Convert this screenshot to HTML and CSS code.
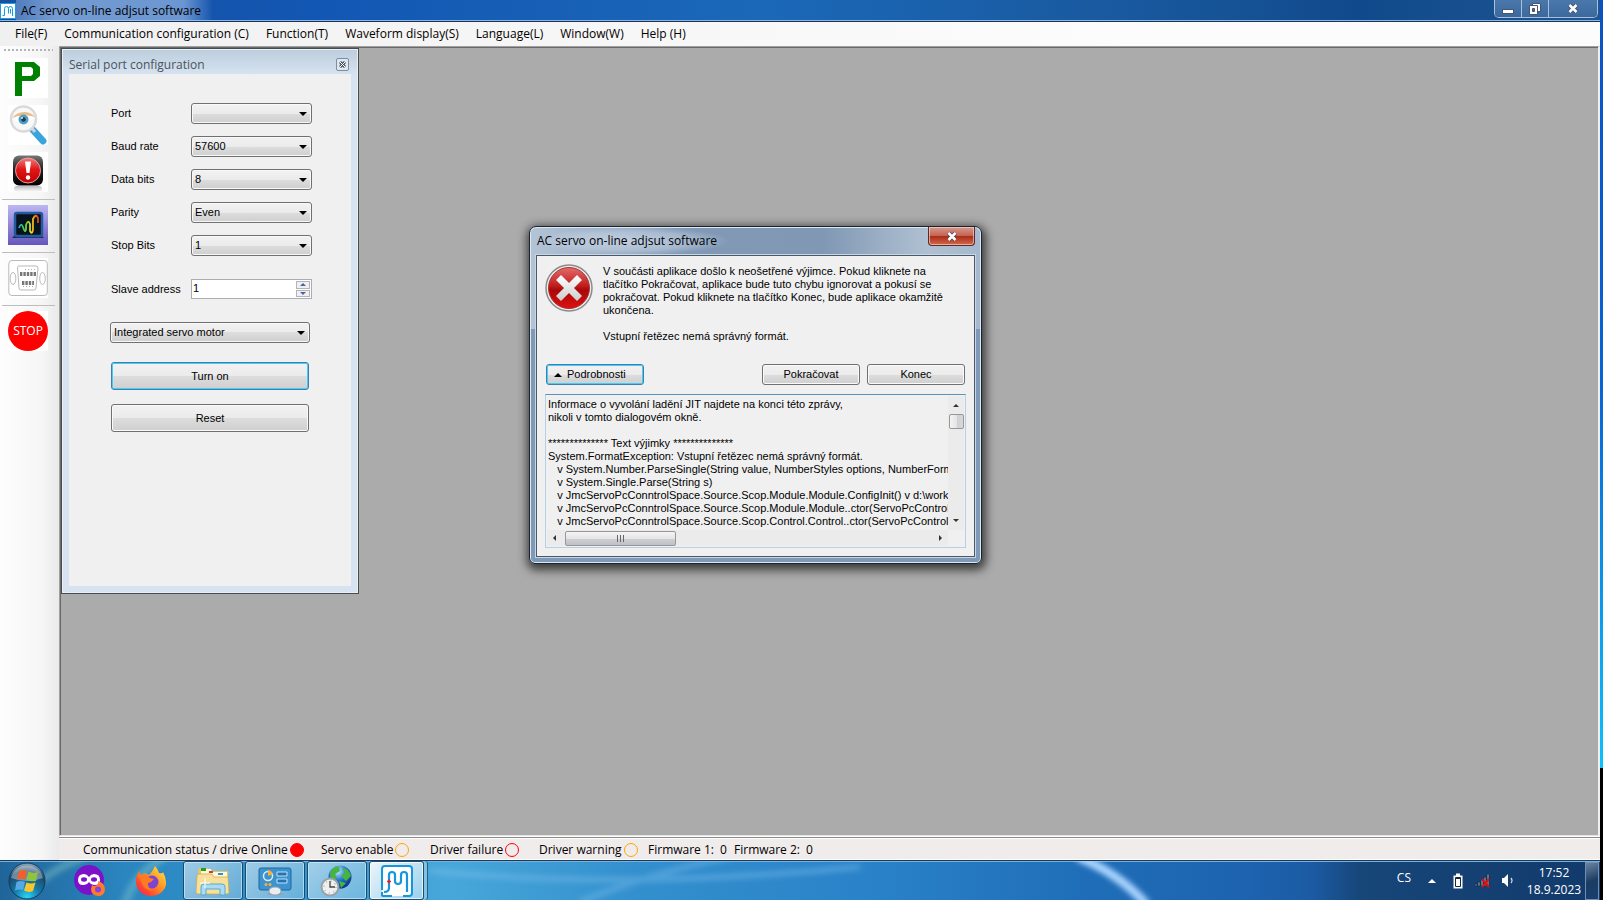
FILE: index.html
```html
<!DOCTYPE html>
<html lang="en">
<head>
    <meta charset="UTF-8">
    <meta name="viewport" content="width=device-width, initial-scale=1.0">
    <title>AC servo on-line adjsut software</title>
    <link rel="stylesheet" href="styles.css">
</head>
<body>
    <div class="screen">
        <!-- Title bar -->
        <header class="titlebar">
            <svg class="app-icon" viewBox="0 0 16 16">
                <rect x="0.5" y="0.5" width="15" height="15" fill="#fff" stroke="#1b9be0"/>
                <path d="M2.500 12.500H4.500V5.500Q4.500 3.500 6.500 3.500T8.500 5.500V10.500M8.500 5.500Q8.500 3.500 10.500 3.500T12.500 5.500V13M10.500 6V10.500" fill="none" stroke="#1b9be0"/>
            </svg>
            <h1>AC servo on-line adjsut software</h1>
            <div class="caption-buttons">
                <button type="button" aria-label="Minimize">
                    <svg width="12" height="12" viewBox="0 0 12 12"><rect x="0.500" y="6.500" width="11" height="4" fill="#fff" stroke="#47546b"/></svg>
                </button>
                <button type="button" aria-label="Restore">
                    <svg width="12" height="12" viewBox="0 0 12 12"><path d="M3.500 .5H11.500V8.500H3.500Z" fill="#fff" stroke="#47546b"/><path d="M.5 2.500H8.500V11.500H.5Z" fill="#fff" stroke="#47546b"/><path d="M3.500 5.500H5.500V8.500H3.500Z" fill="#3c6ba5" stroke="#47546b"/></svg>
                </button>
                <button type="button" class="wide" aria-label="Close">
                    <svg width="12" height="11" viewBox="0 0 12 11"><path d="M2.500 2L9.500 9M9.500 2L2.500 9" stroke="#47546b" stroke-width="4.500"/><path d="M2.500 2L9.500 9M9.500 2L2.500 9" stroke="#fff" stroke-width="2.500"/></svg>
                </button>
            </div>
        </header>

        <nav class="menubar">
            <a href="#">File(F)</a>
            <a href="#">Communication configuration (C)</a>
            <a href="#">Function(T)</a>
            <a href="#">Waveform display(S)</a>
            <a href="#">Language(L)</a>
            <a href="#">Window(W)</a>
            <a href="#">Help (H)</a>
        </nav>

        <div class="workspace">
            <!-- Toolbar -->
            <aside class="toolbar">
                <div class="grip"></div>
                <button type="button" aria-label="Parameters">
                    <svg viewBox="0 0 40 40"><path d="M7 4H26L32 9V18L26 23H14V38H7ZM14 9V18H23L25 16V11L23 9Z" fill="#008000" fill-rule="evenodd"/></svg>
                </button>
                <button type="button" aria-label="Monitor">
                    <svg viewBox="0 0 40 40">
                        <path d="M25 25L35 36" stroke="#3aa5dd" stroke-width="7" stroke-linecap="round"/>
                        <path d="M23 22L27 27" stroke="#c9d3d8" stroke-width="3"/>
                        <circle cx="15.500" cy="14" r="12.500" fill="#f8f8f8" stroke="#dadada" stroke-width="2.500"/>
                        <path d="M5 14Q15 4 26 13Q16 23 5 14Z" fill="#fff"/>
                        <path d="M4 13Q9 7 16 7T27 12Q15 8 4 13" fill="#e9bd86"/>
                        <circle cx="15.500" cy="14.500" r="5" fill="#4e9fc8"/>
                        <circle cx="15.500" cy="14.500" r="2.300" fill="#233a48"/>
                        <circle cx="14" cy="13" r="1" fill="#cfeaf5"/>
                    </svg>
                </button>
                <button type="button" aria-label="Alarm">
                    <svg viewBox="0 0 40 40">
                        <defs>
                            <linearGradient id="black" x2="0" y2="1"><stop offset="0" stop-color="#777"/><stop offset=".45" stop-color="#222"/><stop offset="1" stop-color="#000"/></linearGradient>
                            <linearGradient id="red" x2="0" y2="1"><stop offset="0" stop-color="#f27c7c"/><stop offset=".45" stop-color="#e01717"/><stop offset="1" stop-color="#c00000"/></linearGradient>
                            <linearGradient id="fade" x2="0" y2="1"><stop offset="0" stop-color="#bbb"/><stop offset="1" stop-color="#fff"/></linearGradient>
                        </defs>
                        <rect x="6" y="34" width="28" height="6" rx="3" fill="url(#fade)"/>
                        <rect x="5" y="3.500" width="30" height="30" rx="6" fill="url(#black)"/>
                        <circle cx="20" cy="18.500" r="12.500" fill="url(#red)" stroke="#e8a0a0"/>
                        <path d="M17 9.500H23L21.500 21H18.500Z" fill="#fff"/>
                        <circle cx="20" cy="25.500" r="2.200" fill="#fff"/>
                    </svg>
                </button>
                <hr>
                <button type="button" class="active" aria-label="Waveform">
                    <svg viewBox="0 0 40 40">
                        <defs>
                            <linearGradient id="wave"><stop offset="0" stop-color="#12b6c4"/><stop offset=".35" stop-color="#5fd32e"/><stop offset=".65" stop-color="#f2e01c"/><stop offset="1" stop-color="#e43d17"/></linearGradient>
                        </defs>
                        <path d="M4 33L8 29H32L36 33Z" fill="#1c2c58"/>
                        <rect x="7" y="8" width="27" height="23" rx="2" fill="#09121f" stroke="#245b9c" stroke-width="2.500"/>
                        <path d="M11 23Q13 17 15 22Q17 29 18 24V20Q20 14 22 19V26Q24 30 25 25V14Q28 8 30 13V18" fill="none" stroke="url(#wave)" stroke-width="1.800"/>
                    </svg>
                </button>
                <hr>
                <button type="button" aria-label="Serial port">
                    <svg viewBox="0 0 40 40">
                        <g fill="none" stroke="#b9b9b9">
                            <rect x=".8" y="2.500" width="38.500" height="35" rx="3"/>
                            <path d="M9.500 9.500Q9.500 8 11 8H28Q30 8 30 10L28 30Q28 32 26 32H13Q11 32 11 30Z"/>
                            <ellipse cx="5" cy="20.500" rx="2.800" ry="6"/>
                            <ellipse cx="34.500" cy="20.500" rx="2.800" ry="6"/>
                        </g>
                        <path d="M12 16H28M14 25H26" stroke="#777" stroke-width="4" stroke-dasharray="2.400 1"/>
                        <path d="M17 11.500H28M15 28.500H26" stroke="#aaa" stroke-dasharray="1 2"/>
                    </svg>
                </button>
                <hr>
                <button type="button" class="stop"><span>STOP</span></button>
            </aside>

            <div class="main">
                <main class="mdi">
                    <!-- Serial port window -->
                    <section class="child-window">
                        <div class="child-header">
                            <h2>Serial port configuration</h2>
                            <button type="button" aria-label="Close window">
                                <svg width="7" height="7" viewBox="0 0 7 7"><path d="M1 1L6 6M6 1L1 6" stroke="#4b5360" stroke-width="3"/><path d="M1 1L6 6M6 1L1 6" stroke="#fff"/></svg>
                            </button>
                        </div>
                        <form class="serial-form">
                            <div class="form-group">
                                <label for="port">Port</label>
                                <div class="combo"><select id="port"><option></option></select></div>
                            </div>
                            <div class="form-group">
                                <label for="baud">Baud rate</label>
                                <div class="combo"><select id="baud"><option>57600</option></select></div>
                            </div>
                            <div class="form-group">
                                <label for="data-bits">Data bits</label>
                                <div class="combo"><select id="data-bits"><option>8</option></select></div>
                            </div>
                            <div class="form-group">
                                <label for="parity">Parity</label>
                                <div class="combo"><select id="parity"><option>Even</option></select></div>
                            </div>
                            <div class="form-group">
                                <label for="stop-bits">Stop Bits</label>
                                <div class="combo"><select id="stop-bits"><option>1</option></select></div>
                            </div>
                            <div class="form-group slave">
                                <label for="slave">Slave address</label>
                                <div class="spinner">
                                    <input type="text" id="slave" value="1">
                                    <div class="spin-buttons">
                                        <button type="button" aria-label="Increase"><i class="tri up"></i></button>
                                        <button type="button" aria-label="Decrease"><i class="tri down"></i></button>
                                    </div>
                                </div>
                            </div>
                            <div class="combo motor"><select id="motor" aria-label="Motor type"><option>Integrated servo motor</option></select></div>
                            <button type="button" class="btn large focused">Turn on</button>
                            <button type="button" class="btn large">Reset</button>
                        </form>
                    </section>

                    <!-- Exception dialog -->
                    <section class="dialog" role="dialog" aria-labelledby="dialog-title">
                        <div class="dialog-header">
                            <h2 id="dialog-title">AC servo on-line adjsut software</h2>
                            <button type="button" class="dialog-close" aria-label="Close dialog">
                                <svg width="12" height="11" viewBox="0 0 12 11"><path d="M2.500 2L9.500 9M9.500 2L2.500 9" stroke="#5d4a52" stroke-width="4.500"/><path d="M2.500 2L9.500 9M9.500 2L2.500 9" stroke="#fff" stroke-width="2.500"/></svg>
                            </button>
                        </div>
                        <div class="dialog-body">
                            <div class="message">
                                <svg class="error-icon" viewBox="0 0 48 48">
                                    <defs>
                                        <linearGradient id="err" x2="0" y2="1"><stop offset="0" stop-color="#e46a6a"/><stop offset=".45" stop-color="#c01c1c"/><stop offset=".55" stop-color="#a80808"/><stop offset="1" stop-color="#e01010"/></linearGradient>
                                        <linearGradient id="cross" x2="0" y2="1"><stop offset="0" stop-color="#fff"/><stop offset="1" stop-color="#ccc"/></linearGradient>
                                    </defs>
                                    <circle cx="24" cy="24" r="23" fill="#eee" stroke="#8b8b8b" stroke-width="1.500"/>
                                    <circle cx="24" cy="24" r="20.500" fill="url(#err)" stroke="#a33"/>
                                    <path d="M16 11L24 19L32 11L37 16L29 24L37 32L32 37L24 29L16 37L11 32L19 24L11 16Z" fill="url(#cross)"/>
                                </svg>
                                <div class="message-text">
                                    <p>V součásti aplikace došlo k neošetřené výjimce. Pokud kliknete na<br>tlačítko Pokračovat, aplikace bude tuto chybu ignorovat a pokusí se<br>pokračovat. Pokud kliknete na tlačítko Konec, bude aplikace okamžitě<br>ukončena.</p>
                                    <p>Vstupní řetězec nemá správný formát.</p>
                                </div>
                            </div>
                            <div class="dialog-buttons">
                                <button type="button" class="btn details focused"><i class="tri up"></i>Podrobnosti</button>
                                <button type="button" class="btn">Pokračovat</button>
                                <button type="button" class="btn">Konec</button>
                            </div>
                            <div class="log">
                                <textarea readonly wrap="off" aria-label="Podrobnosti">Informace o vyvolání ladění JIT najdete na konci této zprávy,
nikoli v tomto dialogovém okně.

************** Text výjimky **************
System.FormatException: Vstupní řetězec nemá správný formát.
   v System.Number.ParseSingle(String value, NumberStyles options, NumberFormatInfo numfmt)
   v System.Single.Parse(String s)
   v JmcServoPcConntrolSpace.Source.Scop.Module.Module.ConfigInit() v d:\work\pc
   v JmcServoPcConntrolSpace.Source.Scop.Module.Module..ctor(ServoPcControl main)
   v JmcServoPcConntrolSpace.Source.Scop.Control.Control..ctor(ServoPcControl module)</textarea>
                                <div class="scroll-y">
                                    <i class="tri up"></i>
                                    <div class="thumb"></div>
                                    <i class="tri down"></i>
                                </div>
                                <div class="scroll-x">
                                    <i class="tri left"></i>
                                    <div class="thumb"><span></span><span></span><span></span></div>
                                    <i class="tri right"></i>
                                </div>
                            </div>
                        </div>
                    </section>
                </main>

                <footer class="statusbar">
                    <div class="status online">Communication status / drive Online<span class="lamp red filled"></span></div>
                    <div class="status enable">Servo enable<span class="lamp orange"></span></div>
                    <div class="status failure">Driver failure<span class="lamp red"></span></div>
                    <div class="status warning">Driver warning<span class="lamp orange"></span></div>
                    <div class="status firmware"><span>Firmware 1:</span><span>0</span></div>
                    <div class="status firmware"><span>Firmware 2:</span><span>0</span></div>
                </footer>
            </div>
        </div>

        <!-- Taskbar -->
        <div class="taskbar">
            <svg class="wallpaper" viewBox="0 0 1600 40" preserveAspectRatio="none">
                <defs>
                    <filter id="soft" x="-20%" y="-50%" width="140%" height="200%"><feGaussianBlur stdDeviation="3"/></filter>
                </defs>
                <path d="M1078 -4Q1118 12 1146 44" fill="none" stroke="#a9d4ff" stroke-width="9" filter="url(#soft)"/>
                <path d="M580 42Q650 12 730 -4M430 10Q620 30 860 6" fill="none" stroke="#7fc0ee" stroke-opacity=".35" stroke-width="7" filter="url(#soft)"/>
                <path d="M125 44Q135 12 165 -4M20 44Q40 12 85 -4" fill="none" stroke="#9fdcc8" stroke-opacity=".35" stroke-width="8" filter="url(#soft)"/>
            </svg>
            <button type="button" class="start" aria-label="Start">
                <svg viewBox="0 0 38 38">
                    <defs>
                        <radialGradient id="orb" cx=".5" cy=".95" r=".9"><stop offset="0" stop-color="#28d5f8"/><stop offset=".4" stop-color="#1779a8"/><stop offset=".8" stop-color="#1c4668"/><stop offset="1" stop-color="#7f9cb2"/></radialGradient>
                    </defs>
                    <circle cx="19" cy="19" r="18" fill="url(#orb)" stroke="#123b5c"/>
                    <path d="M3 16A16.500 16.500 0 0 1 35 16Q19 22 3 16Z" fill="#fff" opacity=".35"/>
                    <path d="M11 9Q15 7 19 9L17 18Q13 16 9 18Z" fill="#f0602a"/>
                    <path d="M20.500 9.500Q25 12 30 10L28 19Q23 20 18.500 18Z" fill="#8fc43d"/>
                    <path d="M8.500 20Q13 18 17 20L15 28Q11 27 7 28.500Z" fill="#55a9e6"/>
                    <path d="M18.500 20.500Q23 22.500 27.500 20.500L25 29Q21 31 16 28.500Z" fill="#fbc52c"/>
                </svg>
            </button>
            <div class="pinned">
                <button type="button" aria-label="Firefox private browsing">
                    <svg viewBox="0 0 32 32">
                        <circle cx="15" cy="15" r="15" fill="#7a12c9"/>
                        <path d="M4 15Q4 9 10 9Q13 9 15 12Q17 9 20 9Q26 9 26 15Q26 20 21 20Q17 20 15 17Q13 20 9 20Q4 20 4 15Z" fill="#fff"/>
                        <ellipse cx="10" cy="14.500" rx="3" ry="2.200" fill="#7a12c9"/><ellipse cx="20" cy="14.500" rx="3" ry="2.200" fill="#7a12c9"/>
                        <path d="M18 20Q20 22 23 20Q25 18 24 16Q31 18 31 25Q30 31 24 31Q17 30 17 24Z" fill="#ff7b2c"/>
                        <circle cx="24" cy="24.500" r="3" fill="#8643dd"/>
                    </svg>
                </button>
                <button type="button" aria-label="Firefox">
                    <svg viewBox="0 0 32 32">
                        <defs>
                            <linearGradient id="fox" x1="1" x2="0" y2="1"><stop offset="0" stop-color="#fff04a"/><stop offset=".4" stop-color="#ff9b26"/><stop offset=".75" stop-color="#ff4433"/><stop offset="1" stop-color="#e81b75"/></linearGradient>
                        </defs>
                        <path d="M20 1Q23 4 24 8Q28 9 28 7Q33 16 30 23Q25 31 16 31Q6 31 2 22Q-1 14 4 6L6 10L10 8L14 10Q18 6 20 1Z" fill="url(#fox)"/>
                        <circle cx="17" cy="17" r="6.500" fill="#7d45cf"/>
                        <path d="M2 10Q9 8 15 13L19 14Q17 17 13 18Q12 23 18 25Q10 26 7 19Q6 14 2 10Z" fill="#ff7a22"/>
                    </svg>
                </button>
            </div>
            <button type="button" class="task" aria-label="Explorer">
                <svg viewBox="0 0 34 30">
                    <path d="M2 5L3 2H12L14 5H31Q33 5 32 9V26H2Z" fill="#e5c566"/>
                    <path d="M5 3H15L16 6H31V12H5Z" fill="#fff7d8"/>
                    <path d="M5 2H10V5H5Z" fill="#17a32b"/><path d="M13 5H17V7H13Z" fill="#d83b22"/><path d="M22 7H27V9H22Z" fill="#2492d6"/>
                    <path d="M1 10Q1 8 3 8H16L18 11H32L33 26Q33 28 31 28H2Q0 28 0 26Z" fill="#f7e19a" stroke="#cda542" stroke-width=".7"/>
                    <path d="M5 29V21Q5 18 8 18H26Q29 18 29 21V29H24V23H10V29Z" fill="#a9dcf2" stroke="#5ba6d3"/>
                    <path d="M9 12V22M4 17H14" stroke="#fff"/>
                </svg>
            </button>
            <button type="button" class="task" aria-label="Control panel">
                <svg viewBox="0 0 34 30">
                    <rect x="1" y="2" width="32" height="22" rx="2" fill="#3d93cf" stroke="#21679c"/>
                    <circle cx="10" cy="10" r="4.500" fill="none" stroke="#d9f0fc" stroke-width="1.500"/>
                    <path d="M10 10V4A6 6 0 0 1 15 8Z" fill="#ffad33"/>
                    <path d="M19 6H29V10H19ZM19 13H29V17H19Z" fill="#2474b4" stroke="#bfe2f7"/>
                    <circle cx="8" cy="18.500" r="1.500" fill="#ffad33"/><circle cx="12" cy="18.500" r="1.500" fill="#ffad33"/>
                    <ellipse cx="17" cy="28" rx="8" ry="1.500" fill="#8fa4b2"/>
                    <ellipse cx="17" cy="25" rx="6" ry="4" fill="#e9edf0" stroke="#9aa7b0"/>
                </svg>
            </button>
            <button type="button" class="task" aria-label="Region and time">
                <svg viewBox="0 0 34 32">
                    <defs>
                        <radialGradient id="globe" cx=".4" cy=".25" r=".8"><stop offset="0" stop-color="#b9ecff"/><stop offset=".5" stop-color="#2272cf"/><stop offset="1" stop-color="#092a80"/></radialGradient>
                    </defs>
                    <circle cx="20" cy="12" r="11.500" fill="url(#globe)"/>
                    <path d="M11 6Q15 0 19 2L20 6L15 9L17 13L12 16Q9 12 11 6ZM22 3Q29 3 31 11L26 16L21 11L25 8ZM19 16L26 18L21 23Z" fill="#45b53b"/>
                    <circle cx="10" cy="22" r="8.500" fill="#eef0ee" stroke="#97a3aa" stroke-width="2"/>
                    <path d="M10 16V22H15" fill="none" stroke="#444" stroke-width="1.300"/>
                    <circle cx="10" cy="22" r="6" fill="none" stroke="#888" stroke-dasharray="1 3.700"/>
                </svg>
            </button>
            <button type="button" class="task current" aria-label="AC servo on-line adjsut software">
                <svg viewBox="0 0 32 32">
                    <path d="M1 26V4Q1 1 4 1H28Q31 1 31 4V28Q31 31 28 31H1Z" fill="#fff"/>
                    <path d="M1 25V4Q1 1 4 1H28Q31 1 31 4V28Q31 31 28 31H22M1 27V30Q1 31 3 31H11" fill="none" stroke="#1597dc" stroke-width="2"/>
                    <path d="M3 27Q8 27 8 23V10Q8 7 11 7Q14 7 14 10V16Q14 19 17 19T20 16V10Q20 7 23 7Q26 7 26 10V27" fill="none" stroke="#1597dc" stroke-width="2.200"/>
                    <path d="M6 16.500H10M8 14.500V18.500" stroke="#e22" stroke-width="1.500"/>
                </svg>
            </button>
            <div class="tray">
                <span class="lang">CS</span>
                <i class="tri up"></i>
                <svg width="10" height="16" viewBox="0 0 10 16"><path d="M3 .5H7V2.500H9.500V15.500H.5V2.500H3Z" fill="#fff"/><path d="M2.500 4.500H7.500V13.500H2.500Z" fill="#fff" stroke="#17263c"/><path d="M3 4H7V6H3Z" fill="#17263c"/></svg>
                <svg width="16" height="15" viewBox="0 0 16 15"><path d="M1 11H3V13H1ZM4 9H6V13H4ZM7 7H9V13H7ZM10 4H12V13H10ZM13 1H15V13H13Z" fill="#8696ab" stroke="#0a2340" stroke-width=".6"/><path d="M8 6L15 14M15 6L8 14" stroke="#e01010" stroke-width="2"/></svg>
                <svg width="14" height="15" viewBox="0 0 14 15"><path d="M1 5H3L7 1V14L3 10H1Z" fill="#fff"/><path d="M10 5Q12 7.500 10 10" fill="none" stroke="#c8d4e0" stroke-width="1.300"/></svg>
                <div class="clock"><time>17:52</time><span>18.9.2023</span></div>
            </div>
            <button type="button" class="show-desktop" aria-label="Show desktop"></button>
        </div>
    </div>
    <div class="edge"></div>
</body>
</html>
```
FILE: styles.css
```css
/* General */
* {
    box-sizing: border-box;
}

body {
    margin: 0;
    min-height: 100vh;
    display: flex;
    background: #000;
    color: #000;
    font: 12px/16px "Open Sans", "Noto Sans", sans-serif;
}

h1, h2, p {
    margin: 0;
    font-size: 12px;
    font-weight: normal;
}

button, select, input, textarea {
    margin: 0;
    padding: 0;
    border: 0;
    color: inherit;
    font: inherit;
    outline: none;
}

svg {
    display: block;
}

.screen {
    flex: 1;
    min-width: 0;
    display: flex;
    flex-direction: column;
}

.edge {
    width: 3px;
    height: 768px;
    background: linear-gradient(#0a52c4, #0763d4 50%, #0cc0ff);
}

/* Title bar */
.titlebar {
    height: 22px;
    display: flex;
    background: linear-gradient(90deg, #1a4f9e, #1257b4 20%, #1b68b8 48%, #19599f 70%, #114a8c 85%, #1e5592);
    border-bottom: 1px solid #16345c;
    box-shadow: inset 0 -1px #8fb5df;
}

.app-icon {
    width: 16px;
    height: 16px;
    margin-top: 3px;
}

.titlebar h1 {
    padding: 3px 12px 0 5px;
    background: linear-gradient(90deg, rgba(165, 195, 235, 0.4), rgba(165, 195, 235, 0.65) 20%, rgba(165, 195, 235, 0.6) 85%, transparent);
}

.caption-buttons {
    display: flex;
    height: 18px;
    margin: 0 2px 0 auto;
    border: 1px solid #a8c0dc;
    border-top: 0;
    border-radius: 0 0 5px 5px;
    overflow: hidden;
}

.caption-buttons button {
    width: 27px;
    display: grid;
    place-items: center;
    background: linear-gradient(#4b78ab, #3b699e);
    border-right: 1px solid #a8c0dc;
}

.caption-buttons .wide {
    width: 48px;
    border-right: 0;
}

/* Menu */
.menubar {
    height: 24px;
    display: flex;
    gap: 17px;
    padding: 4px 15px;
    background: linear-gradient(90deg, #f0f0f0, #fcfcfc 70%);
}

.menubar a {
    color: #000;
    text-decoration: none;
    white-space: nowrap;
}

.workspace {
    flex: 1;
    display: grid;
    grid-template-columns: 59px 1fr;
}

/* Toolbar */
.toolbar {
    display: flex;
    flex-direction: column;
    padding: 3px 4px 0 2px;
    background: linear-gradient(90deg, #fdfdfd, #f6f6f6 70%, #eaeaea);
}

.grip {
    height: 2px;
    margin: 0 2px 7px;
    background: repeating-linear-gradient(90deg, #b4b4b4 0 2px, transparent 2px 4px);
}

.toolbar button {
    width: 40px;
    height: 40px;
    margin: 0 0 7px 6px;
    background: #fff;
}

.toolbar button.active {
    background: linear-gradient(#bdb6f3, #6557bb);
}

.toolbar button.stop span {
    display: block;
    height: 40px;
    border-radius: 50%;
    background: #f00;
    color: #fff;
    line-height: 40px;
}

.toolbar hr {
    width: 53px;
    height: 1px;
    margin: 0 0 5px;
    border: 0;
    background: #bdbdbd;
}

/* MDI area */
.main {
    display: flex;
    flex-direction: column;
    min-width: 0;
}

.mdi {
    flex: 1;
    position: relative;
    background: #ababab;
    border: 1px solid #a0a0a0;
    border-right: 2px solid #f0f0f0;
    border-bottom-color: #e3e3e3;
    box-shadow: inset 1px 1px #696969;
}

.child-window {
    position: absolute;
    left: 1px;
    top: 1px;
    width: 298px;
    min-height: 546px;
    display: flex;
    flex-direction: column;
    padding: 0 7px 7px;
    border: 1px solid #4b4b4b;
    background: linear-gradient(#bccddd, #d7e3f0 26px);
    box-shadow: inset 0 0 0 1px #e6f0fa;
}

.child-header {
    height: 25px;
    display: flex;
    justify-content: space-between;
    padding: 8px 2px 0 0;
    color: #4a535c;
}

.child-header button {
    width: 13px;
    height: 13px;
    margin-top: 1px;
    display: grid;
    place-items: center;
    border: 1px solid #7d8ca1;
    border-radius: 2px;
    background: #dfe8f2;
}

.serial-form {
    flex: 1;
    padding: 29px 40px;
    background: #f0f0f0;
    font: 11px/13px "Liberation Sans", Arial, sans-serif;
}

.form-group {
    display: grid;
    grid-template-columns: 80px 121px;
    align-items: center;
    margin: 0 0 12px 2px;
}

.combo {
    display: grid;
    align-items: center;
}

.combo select {
    grid-area: 1 / 1;
    height: 21px;
    padding: 0 3px;
    appearance: none;
    border: 1px solid #707070;
    border-radius: 3px;
    background: linear-gradient(#f2f2f2, #ebebeb 50%, #dddddd 50%, #cfcfcf);
    box-shadow: inset 0 0 0 1px #f8f8f8;
}

.combo::after {
    content: "";
    grid-area: 1 / 1;
    justify-self: end;
    margin-right: 5px;
    border: 4px solid transparent;
    border-top-color: #000;
    border-bottom: 0;
    pointer-events: none;
}

.slave {
    margin-top: 23px;
    margin-bottom: 23px;
}

.spinner {
    display: flex;
    height: 20px;
    border: 1px solid #abadb3;
    background: #fff;
}

.spinner input {
    flex: 1;
    min-width: 0;
    padding: 0 1px 2px;
    background: transparent;
}

.spin-buttons {
    display: flex;
    flex-direction: column;
    gap: 1px;
    padding: 1px;
}

.spin-buttons button {
    flex: 1;
    width: 14px;
    display: grid;
    place-items: center;
    border: 1px solid #b4b4b4;
    background: #f0f0f0;
    color: #4a62a8;
}

.motor {
    width: 200px;
    margin: 0 0 19px 1px;
}

/* Buttons */
.btn {
    height: 21px;
    width: 98px;
    border: 1px solid #707070;
    border-radius: 3px;
    background: linear-gradient(#f2f2f2, #ebebeb 50%, #dddddd 50%, #cfcfcf);
    box-shadow: inset 0 0 0 1px #fafafa;
}

.btn.large {
    display: block;
    width: 198px;
    height: 28px;
    margin: 0 0 14px 2px;
}

.btn.focused {
    border-color: #3c7fb1;
    box-shadow: inset 0 0 0 1px #46cdf5;
}

/* Arrows */
.tri {
    width: 0;
    height: 0;
    border: 3px solid transparent;
}

.tri.up {
    border-bottom-color: currentColor;
    border-top: 0;
}

.tri.down {
    border-top-color: currentColor;
    border-bottom: 0;
}

.tri.left {
    border-right-color: currentColor;
    border-left: 0;
}

.tri.right {
    border-left-color: currentColor;
    border-right: 0;
}

/* Exception dialog */
.dialog {
    position: absolute;
    left: 469px;
    top: 179px;
    width: 453px;
    padding: 0 6px 6px;
    border: 1px solid #1d232b;
    border-radius: 7px 7px 6px 6px;
    background: linear-gradient(transparent 102px, #7f9ab8 102px), linear-gradient(90deg, #b4c4d6, #8199b5 35%, #8098b4 65%, #b0c0d2 88%, #a5b8cd);
    box-shadow: inset 0 0 0 1px #dce8f4, 1px 3px 10px 3px rgba(0, 0, 0, 0.65);
}

.dialog-header {
    height: 28px;
    display: flex;
    justify-content: space-between;
}

.dialog-header h2 {
    padding: 6px 12px 0 1px;
    background: radial-gradient(closest-side, rgba(220, 231, 243, 0.6), rgba(210, 223, 238, 0.4) 65%, transparent);
}

.dialog-close {
    width: 47px;
    height: 19px;
    display: grid;
    place-items: center;
    border: 1px solid #5b2a2a;
    border-top: 0;
    border-radius: 0 0 4px 4px;
    background: linear-gradient(#d59a92, #c4614f 50%, #ab2a12 50%, #cf6a50);
    box-shadow: inset 0 0 0 1px rgba(255, 220, 210, 0.6);
}

.dialog-body {
    padding: 8px;
    border: 1px solid #4b5868;
    background: #f0f0f0;
    box-shadow: 0 0 0 1px #c8d7e6;
    font: 11px/13px "Liberation Sans", Arial, sans-serif;
}

.message {
    display: flex;
    gap: 10px;
    height: 100px;
}

.error-icon {
    width: 48px;
    height: 48px;
    flex: none;
}

.message-text {
    padding-top: 1px;
}

.message-text p {
    margin-bottom: 13px;
    font-size: 11px;
    white-space: nowrap;
}

.dialog-buttons {
    display: flex;
    gap: 7px;
    padding: 0 1px 9px;
}

.btn.details {
    display: flex;
    align-items: center;
    gap: 5px;
    padding-left: 7px;
    margin-right: auto;
}

.btn.details .tri {
    border-width: 0 4px 4px;
}

.log {
    display: grid;
    grid-template: 134px 16px / 1fr 16px;
    padding: 1px;
    border: 1px solid #b5cfe7;
    border-top-color: #5794bf;
}

.log textarea {
    width: 100%;
    height: 100%;
    padding: 2px 0 0 1px;
    resize: none;
    overflow: hidden;
    background: transparent;
    white-space: pre;
}

.scroll-y, .scroll-x {
    display: flex;
    align-items: center;
    background: #ebebeb;
    color: #333;
}

.scroll-y {
    flex-direction: column;
    padding: 8px 0;
}

.scroll-x {
    padding: 0 6px;
}

.scroll-y .tri:last-child {
    margin-top: auto;
}

.scroll-x .tri:last-child {
    margin-left: auto;
}

.thumb {
    border: 1px solid #979797;
    border-radius: 2px;
    background: linear-gradient(#f4f4f4, #e5e5e5 50%, #cfd0d4 50%, #bfc0c4);
}

.scroll-y .thumb {
    width: 15px;
    height: 15px;
    margin-top: 7px;
    background: linear-gradient(90deg, #f4f4f4, #e5e5e5 50%, #cfd0d4 50%, #d8d8dc);
}

.scroll-x .thumb {
    width: 111px;
    height: 15px;
    margin-left: 9px;
    display: flex;
    justify-content: center;
    gap: 2px;
    padding-top: 3px;
}

.scroll-x .thumb span {
    width: 1px;
    height: 7px;
    background: #666;
}

/* Status bar */
.statusbar {
    height: 24px;
    display: flex;
    padding: 3px 0 0 24px;
    background: #f0eceb;
    border-top: 1px solid #fff;
    border-bottom: 1px solid #fff;
    box-shadow: inset 0 1px #8a8a8a, inset 0 2px #fff;
}

.status {
    display: flex;
    align-items: center;
    gap: 2px;
    white-space: nowrap;
}

.online { width: 238px; }
.enable { width: 109px; }
.failure { width: 109px; }
.warning { width: 109px; }

.firmware {
    gap: 6px;
    width: 86px;
}

.lamp {
    width: 14px;
    height: 14px;
    border: 1px solid;
    border-radius: 50%;
}

.lamp.red { color: #f00; }
.lamp.orange { color: #ffa500; }
.lamp.filled { background: #f00; }

/* Taskbar */
.taskbar {
    position: relative;
    height: 40px;
    display: flex;
    align-items: center;
    overflow: hidden;
    background: linear-gradient(90deg, #20659a, #2b86c0 8%, #2f93cd 18%, #48a7da 28%, #338fcd 40%, #2a83c8 54%, #1f6db8 68%, #1d63af 78%, #1b5ba4 82%, #174679 85%, #123a6c);
    border-top: 1px solid #173a5e;
    box-shadow: inset 0 1px #79b0dc;
}

.wallpaper {
    position: absolute;
    left: 0;
    top: 0;
    width: 100%;
    height: 100%;
    pointer-events: none;
}

.taskbar button {
    position: relative;
    background: none;
}

.start {
    width: 38px;
    height: 38px;
    margin: 0 28px 0 8px;
}

.pinned {
    display: flex;
    gap: 29px;
    margin-right: 16px;
}

.pinned button {
    width: 32px;
    height: 32px;
}

.taskbar .task {
    width: 60px;
    height: 39px;
    margin-right: 2px;
    display: grid;
    place-items: center;
    border: 1px solid #1d4b70;
    border-radius: 3px;
    background: linear-gradient(135deg, rgba(255, 255, 255, 0.55), rgba(255, 255, 255, 0.25));
    box-shadow: inset 0 0 0 1px rgba(215, 240, 255, 0.6);
}

.task svg {
    width: 34px;
    height: 32px;
}

.taskbar .current {
    width: 55px;
    background: linear-gradient(135deg, rgba(255, 255, 255, 0.9), rgba(200, 232, 248, 0.65));
    box-shadow: inset 0 0 0 1px rgba(255, 255, 255, 0.7), 3px 0 #7dc3e4, 4px 0 #2a5d80;
}

.tray {
    position: relative;
    display: flex;
    align-items: center;
    margin-left: auto;
    color: #fff;
}

.lang {
    margin: 0 17px 5px 0;
}

.tray .tri {
    border-width: 0 4px 4px;
    margin-right: 17px;
}

.tray svg {
    margin-right: 11px;
}

.clock {
    width: 56px;
    margin-right: 3px;
    text-align: center;
    line-height: 17px;
}

.clock time, .clock span {
    display: block;
}

.taskbar .show-desktop {
    width: 14px;
    height: 38px;
    margin-right: 1px;
    border: 1px solid #6f8eb0;
    background: linear-gradient(160deg, #6a84a0, #1c3c62 50%, #183f70);
}
```
